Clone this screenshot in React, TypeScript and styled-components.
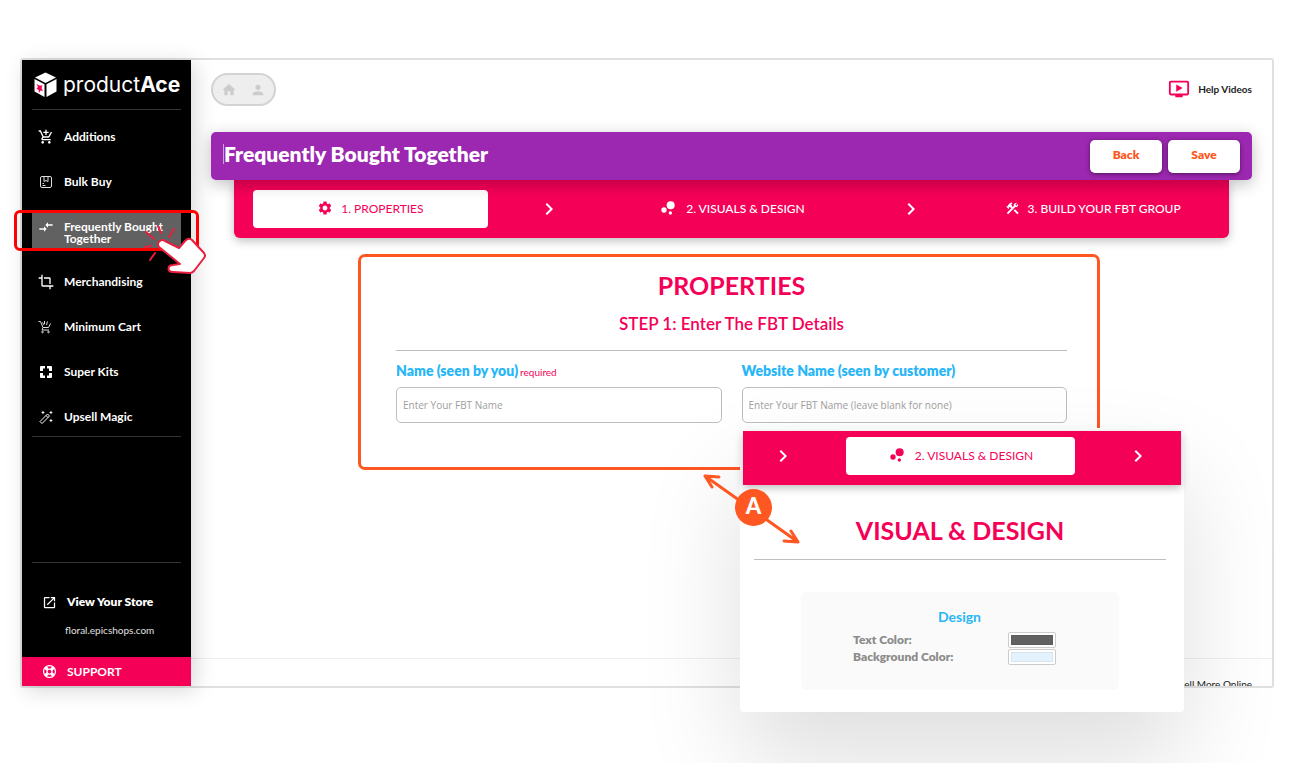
import React from "react";
import styled, { createGlobalStyle } from "styled-components";
import {
  MdAddShoppingCart,
  MdBubbleChart,
  MdChevronRight,
  MdCompareArrows,
  MdConstruction,
  MdCrop,
  MdHome,
  MdOndemandVideo,
  MdOpenInNew,
  MdPerson,
  MdSettings,
} from "react-icons/md";

const color = {
  pink: "#f50057",
  purple: "#9c27b0",
  orange: "#ff5722",
  blue: "#29b6f6",
  line: "#bdbdbd",
};

const GlobalStyle = createGlobalStyle`
  *, *::before, *::after { box-sizing: border-box; }
  body { margin: 0; background: #fff; color: #222; font-family: Lato, "Open Sans", sans-serif; }
  button, input { font-family: inherit; }
  h1, h2, h3, p { margin: 0; }
  svg { display: block; flex: none; }
`;

const Stage = styled.div`
  position: relative;
  min-height: 100vh;
  padding: 58px 25px 75px 20px;
  overflow: hidden;
`;

const Shell = styled.div`
  display: flex;
  height: calc(100vh - 133px);
  min-height: 630px;
  border: 2px solid #e0e0e0;
  border-radius: 3px;
`;

/* ---------- sidebar ---------- */

const Sidebar = styled.aside`
  position: relative;
  z-index: 1;
  display: flex;
  flex-direction: column;
  flex: 0 0 169px;
  background: #000;
  color: #fff;
  box-shadow: 4px 4px 20px rgba(0, 0, 0, 0.16);
`;

const Brand = styled.a`
  display: flex;
  align-items: center;
  gap: 6px;
  height: 49px;
  padding-left: 12px;
  color: #fff;
  text-decoration: none;
  font: 400 21px/28px Inter, sans-serif;
  b { font-weight: 700; }
`;

const Rule = styled.hr`
  width: auto;
  height: 1px;
  margin: 0 10px;
  border: 0;
  background: #333;
`;

const NavList = styled.nav`
  display: flex;
  flex-direction: column;
  gap: 10px;
  padding: 9px 10px 2px;
`;

const NavLink = styled.a<{ $active?: boolean }>`
  position: relative;
  display: flex;
  align-items: ${(p) => (p.$active ? "flex-start" : "center")};
  gap: 10px;
  min-height: ${(p) => (p.$active ? 37 : 35)}px;
  margin: ${(p) => (p.$active ? "3px 0 5px" : "0")};
  padding: ${(p) => (p.$active ? "7px 0 0 6px" : "0 0 0 6px")};
  background: ${(p) => (p.$active ? "#616161" : "transparent")};
  color: #fff;
  font-size: 12px;
  font-weight: 700;
  line-height: 12px;
  text-decoration: none;
`;

const NavText = styled.span<{ $active?: boolean }>`
  padding-top: ${(p) => (p.$active ? 2 : 0)}px;
`;

const Highlight = styled.span`
  position: absolute;
  inset: -2px -18px;
  border: 3px solid #ff0000;
  border-radius: 6px;
`;

const Pointer = styled.span`
  position: absolute;
  left: 112px;
  top: 12px;
  z-index: 2;
`;

const StoreBlock = styled.div`
  margin-top: auto;
`;

const StoreLink = styled.a`
  display: flex;
  align-items: center;
  gap: 10px;
  padding: 29px 0 0 20px;
  color: #fff;
  font-size: 12px;
  font-weight: 800;
  line-height: 20px;
  text-decoration: none;
`;

const StoreUrl = styled.a`
  display: block;
  padding: 10px 0 19px 43px;
  color: #e0e0e0;
  font-size: 10px;
  line-height: 16px;
  text-decoration: none;
`;

const Support = styled.a`
  display: flex;
  align-items: center;
  gap: 10px;
  height: 29px;
  padding-left: 20px;
  background: ${color.pink};
  color: #fff;
  font-size: 12px;
  font-weight: 700;
  text-decoration: none;
`;

/* ---------- main area ---------- */

const Main = styled.main`
  display: flex;
  flex-direction: column;
  flex: 1;
  min-width: 0;
`;

const TopBar = styled.div`
  display: flex;
  align-items: center;
  justify-content: space-between;
  padding: 13px 20px 0;
`;

const Pill = styled.div`
  display: flex;
  align-items: center;
  gap: 13px;
  height: 33px;
  padding: 0 8px;
  border: 2px solid #d3d3d3;
  border-radius: 17px;
  background: #eee;
`;

const PillButton = styled.button`
  padding: 0;
  border: 0;
  background: none;
  color: #ccc;
`;

const HelpLink = styled.a`
  display: flex;
  align-items: center;
  gap: 8px;
  padding-bottom: 2px;
  color: #222;
  font-size: 10px;
  font-weight: 700;
  text-decoration: none;
  svg { color: ${color.pink}; }
`;

const Banner = styled.header`
  position: relative;
  z-index: 1;
  display: flex;
  align-items: center;
  justify-content: space-between;
  height: 48px;
  margin: 26px 20px 0;
  padding: 0 12px;
  border-radius: 5px;
  background: ${color.purple};
  box-shadow: 0 4px 16px rgba(0, 0, 0, 0.25);
`;

const Title = styled.h1`
  margin-bottom: 4px;
  border-left: 1px solid #d39ddd;
  color: #fff;
  font-size: 21px;
  font-weight: 800;
  line-height: 20px;
`;

const Actions = styled.div`
  display: flex;
  gap: 6px;
`;

const ActionButton = styled.button`
  width: 72px;
  height: 33px;
  padding: 0 0 3px;
  border: 0;
  border-radius: 5px;
  background: #fff;
  color: ${color.orange};
  font-size: 12px;
  font-weight: 800;
  box-shadow: 0 1px 4px rgba(0, 0, 0, 0.5);
`;

const Steps = styled.nav`
  display: grid;
  grid-template-columns: 13fr 7fr 13fr 7fr 13fr;
  align-items: center;
  justify-items: center;
  margin: 0 43px;
  padding: 10px 19px;
  border-radius: 0 0 6px 6px;
  background: ${color.pink};
  color: #fff;
  box-shadow: 0 3px 10px rgba(0, 0, 0, 0.25);
  > svg { margin-right: 3px; }
`;

const Step = styled.button<{ $active?: boolean }>`
  display: flex;
  align-items: center;
  justify-content: center;
  gap: 8px;
  width: 100%;
  height: 38px;
  padding: 0 0 2px;
  border: 0;
  border-radius: 4px;
  background: ${(p) => (p.$active ? "#fff" : "transparent")};
  color: ${(p) => (p.$active ? color.pink : "#fff")};
  font-size: 12px;
  font-weight: ${(p) => (p.$active ? 400 : 500)};
`;

const CardArea = styled.div`
  flex: 1;
  padding: 16px 5px 0 0;
`;

const Card = styled.section`
  max-width: 742px;
  height: 216px;
  margin: 0 auto;
  padding: 16px 30px 0 35px;
  border: 3px solid ${color.orange};
  border-radius: 7px;
`;

const Heading = styled.h2`
  color: ${color.pink};
  font-size: 25px;
  font-weight: 700;
  line-height: 24px;
  text-align: center;
`;

const SubHeading = styled.h3`
  margin: 17px 0 16px;
  color: ${color.pink};
  font-size: 17px;
  font-weight: 600;
  line-height: 20px;
  text-align: center;
`;

const Divider = styled.hr`
  height: 1px;
  margin: 0;
  border: 0;
  background: ${color.line};
`;

const Fields = styled.form`
  display: grid;
  grid-template-columns: 1fr 1fr;
  gap: 20px;
  padding-top: 10px;
`;

const Field = styled.div`
  display: flex;
  flex-direction: column;
  gap: 6px;
`;

const FieldLabel = styled.label`
  height: 20px;
  color: ${color.blue};
  font-size: 14px;
  font-weight: 800;
  line-height: 20px;
  small { margin-left: 2px; color: ${color.pink}; font-size: 10px; font-weight: 400; line-height: 10px; }
`;

const TextInput = styled.input`
  width: 100%;
  height: 36px;
  padding: 0 6px;
  border: 1px solid ${color.line};
  border-radius: 5px;
  background: transparent;
  font-family: "Open Sans", sans-serif;
  font-size: 10px;
  &::placeholder { color: #9e9e9e; opacity: 1; }
`;

const Footer = styled.footer`
  height: 28px;
  padding: 17px 20px 0;
  overflow: hidden;
  border-top: 1px solid #eee;
  color: #222;
  font-size: 10px;
  line-height: 16px;
  text-align: right;
`;

/* ---------- floating panel ---------- */

const Callout = styled.section`
  position: absolute;
  right: 115px;
  top: 428px;
  z-index: 3;
  width: 444px;
  padding: 3px 3px 22px;
  border-radius: 4px;
  background: #fff;
  box-shadow: 0 50px 100px rgba(0, 0, 0, 0.13);
`;

const CalloutBar = styled.nav`
  display: flex;
  align-items: center;
  justify-content: center;
  gap: 51px;
  height: 54px;
  padding: 0 4px 4px 0;
  background: ${color.pink};
  color: #fff;
  box-shadow: 0 3px 8px rgba(0, 0, 0, 0.25);
`;

const CalloutStep = styled(Step)`
  flex: 0 0 229px;
`;

const CalloutBody = styled.div`
  padding: 33px 15px 0 11px;
`;

const PanelHeading = styled(Heading)`
  margin-bottom: 17px;
`;

const DesignBox = styled.fieldset`
  width: 318px;
  margin: 32px 0 0 47px;
  padding: 16px 63px 25px 52px;
  border: 0;
  border-radius: 5px;
  background: #fafafa;
`;

const DesignTitle = styled.h3`
  margin: 0 0 5px 10px;
  color: ${color.blue};
  font-size: 14px;
  font-weight: 700;
  line-height: 18px;
  text-align: center;
`;

const ColorRow = styled.div`
  display: flex;
  align-items: center;
  justify-content: space-between;
  height: 17px;
  color: #8c8c8c;
  font-size: 12px;
  font-weight: 800;
`;

const Swatch = styled.input`
  appearance: none;
  width: 48px;
  height: 16px;
  padding: 2px;
  border: 1px solid #ccc;
  border-radius: 2px;
  background: #fff;
  &::-webkit-color-swatch-wrapper { padding: 0; }
  &::-webkit-color-swatch { border: 1px solid rgba(0, 0, 0, 0.05); border-radius: 0; }
`;

const Marker = styled.div`
  position: absolute;
  left: -40px;
  top: 43px;
  width: 104px;
  height: 76px;
`;

const MarkerDot = styled.span`
  position: absolute;
  left: 35px;
  top: 18px;
  width: 37px;
  height: 37px;
  border-radius: 50%;
  background: ${color.orange};
  color: #fff;
  font: 900 22px/34px Lato, sans-serif;
  text-align: center;
`;

/* ---------- drawings ---------- */

const LogoIcon = () => (
  <svg width="23" height="26" viewBox="0 0 23 26" fill="#fff">
    <path d="M11.500 0.500L22 5.500L11.500 11L1 5.500Z" />
    <path d="M0.500 7L10.500 12.300V25L0.500 19.500Z" />
    <path d="M22.500 7L12.500 12.300V25L22.500 19.500Z" />
    <path fill={color.pink} d="M2.500 12L5.500 13.500L8.500 13.500L7.500 16L9 19L6.500 18.500L5 21L4.600 18L2.500 16.500L4 15Z" />
  </svg>
);

const BoxIcon = () => (
  <svg width="16" height="16" viewBox="0 0 16 16" fill="none" stroke="#ddd" strokeWidth="1">
    <rect x="2.500" y="2.500" width="11" height="11" rx="1.500" />
    <path d="M6 2.500V7.500L8 6.500L10 7.500V2.500M4.500 11.500H7.500M4.500 9.500H6" />
  </svg>
);

const MiniCartIcon = () => (
  <svg width="16" height="16" viewBox="0 0 16 16" fill="none" stroke="#ddd" strokeWidth="1">
    <path d="M0.500 2.500H2.500L5 8.500H10.500L12.500 4.500M5 8.500L4 11H11M6.500 2V5M4.500 3.500L6 6M9.500 2.500L8.500 6" />
    <circle cx="4.500" cy="13" r="0.800" />
    <circle cx="10.500" cy="13" r="0.800" />
  </svg>
);

const KitsIcon = () => (
  <svg width="16" height="16" viewBox="0 0 16 16" fill="#fff">
    <path d="M3 2H7V4.500H5V7H2V3A1 1 0 0 1 3 2ZM9 2H13A1 1 0 0 1 14 3V7H11V4.500H9ZM2 9H5V11.500H7V14H3A1 1 0 0 1 2 13ZM11 9H14V13A1 1 0 0 1 13 14H9V11.500H11Z" />
  </svg>
);

const WandIcon = () => (
  <svg width="16" height="16" viewBox="0 0 16 16" fill="none" stroke="#fff">
    <path d="M2 12.500L9.500 5L11.500 7L4 14.500Z M8 6.500L10 8.500" strokeLinejoin="round" />
    <path fill="#fff" stroke="none" d="M5 1.500L5.600 3L7 3.500L5.600 4L5 5.500L4.300 4L3 3.500L4.300 3ZM13 1.500L13.600 3L15 3.500L13.600 4L13 5.500L12.300 4L11 3.500L12.300 3ZM13 9.500L13.600 11L15 11.500L13.600 12L13 13.500L12.300 12L11 11.500L12.300 11Z" />
  </svg>
);

const LifeRingIcon = () => (
  <svg width="15" height="15" viewBox="0 0 24 24" fill="none" stroke="#fff">
    <circle cx="12" cy="12" r="9.500" strokeWidth="2" />
    <circle cx="12" cy="12" r="4" strokeWidth="2" />
    <path d="M5.500 5.500L9 9M18.500 5.500L15 9M5.500 18.500L9 15M18.500 18.500L15 15" strokeWidth="5" />
  </svg>
);

const HandIcon = () => (
  <svg width="64" height="54" viewBox="0 0 64 54" fill="none" stroke="#e91e3f" strokeWidth="2" strokeLinecap="round">
    <path
      fill="#fff"
      strokeLinejoin="round"
      d="M21 17L35 24L41 17Q45 13 48 16L60 29Q62 32 60 34L50 47Q48 49 46 49L29 48C23 48 23 41 29 41L36 40L15 23C12 19 17 14 21 17Z"
    />
    <path d="M1 23L7 22M2 8L10 15M14 2L17 9M30 5L25 13M11 29L6 36" />
  </svg>
);

const ArrowsDrawing = () => (
  <svg width="104" height="76" viewBox="0 0 104 76" fill="none" stroke={color.orange} strokeWidth="3" strokeLinecap="round">
    <path d="M5 5L98 71M5 5L19 6M5 5L12 16M98 71L84 70M98 71L91 60" />
  </svg>
);

/* ---------- page ---------- */

const navItems = [
  { label: "Additions", icon: <MdAddShoppingCart size={16} /> },
  { label: "Bulk Buy", icon: <BoxIcon /> },
  { label: "Frequently Bought Together", icon: <MdCompareArrows size={16} />, active: true },
  { label: "Merchandising", icon: <MdCrop size={16} /> },
  { label: "Minimum Cart", icon: <MiniCartIcon /> },
  { label: "Super Kits", icon: <KitsIcon /> },
  { label: "Upsell Magic", icon: <WandIcon /> },
];

export default function App() {
  return (
    <Stage>
      <GlobalStyle />
      <Shell>
        <Sidebar>
          <Brand href="#">
            <LogoIcon />
            <span>product<b>Ace</b></span>
          </Brand>
          <Rule />
          <NavList>
            {navItems.map((item) => (
              <NavLink key={item.label} href="#" $active={item.active}>
                {item.icon}
                <NavText $active={item.active}>{item.label}</NavText>
                {item.active && (
                  <>
                    <Highlight />
                    <Pointer><HandIcon /></Pointer>
                  </>
                )}
              </NavLink>
            ))}
          </NavList>
          <Rule />
          <StoreBlock>
            <Rule />
            <StoreLink href="#">
              <MdOpenInNew size={15} />
              View Your Store
            </StoreLink>
            <StoreUrl href="#">floral.epicshops.com</StoreUrl>
            <Support href="#">
              <LifeRingIcon />
              SUPPORT
            </Support>
          </StoreBlock>
        </Sidebar>

        <Main>
          <TopBar>
            <Pill>
              <PillButton aria-label="Home"><MdHome size={16} /></PillButton>
              <PillButton aria-label="Account"><MdPerson size={16} /></PillButton>
            </Pill>
            <HelpLink href="#">
              <MdOndemandVideo size={22} />
              Help Videos
            </HelpLink>
          </TopBar>
          <Banner>
            <Title>Frequently Bought Together</Title>
            <Actions>
              <ActionButton>Back</ActionButton>
              <ActionButton>Save</ActionButton>
            </Actions>
          </Banner>
          <Steps>
            <Step $active><MdSettings size={16} />1. PROPERTIES</Step>
            <MdChevronRight size={24} />
            <Step><MdBubbleChart size={20} />2. VISUALS &amp; DESIGN</Step>
            <MdChevronRight size={24} />
            <Step><MdConstruction size={15} />3. BUILD YOUR FBT GROUP</Step>
          </Steps>
          <CardArea>
            <Card>
              <Heading>PROPERTIES</Heading>
              <SubHeading>STEP 1: Enter The FBT Details</SubHeading>
              <Divider />
              <Fields>
                <Field>
                  <FieldLabel htmlFor="fbt-name">Name (seen by you)<small>required</small></FieldLabel>
                  <TextInput id="fbt-name" placeholder="Enter Your FBT Name" />
                </Field>
                <Field>
                  <FieldLabel htmlFor="fbt-site">Website Name (seen by customer)</FieldLabel>
                  <TextInput id="fbt-site" placeholder="Enter Your FBT Name (leave blank for none)" />
                </Field>
              </Fields>
            </Card>
          </CardArea>
          <Footer>Sell More Online</Footer>
        </Main>
      </Shell>

      <Callout>
        <CalloutBar>
          <MdChevronRight size={24} />
          <CalloutStep $active><MdBubbleChart size={20} />2. VISUALS &amp; DESIGN</CalloutStep>
          <MdChevronRight size={24} />
        </CalloutBar>
        <CalloutBody>
          <PanelHeading>VISUAL &amp; DESIGN</PanelHeading>
          <Divider />
          <DesignBox>
            <DesignTitle>Design</DesignTitle>
            <ColorRow>
              <label htmlFor="text-color">Text Color:</label>
              <Swatch id="text-color" type="color" defaultValue="#616161" />
            </ColorRow>
            <ColorRow>
              <label htmlFor="bg-color">Background Color:</label>
              <Swatch id="bg-color" type="color" defaultValue="#e3f2fd" />
            </ColorRow>
          </DesignBox>
        </CalloutBody>
        <Marker>
          <ArrowsDrawing />
          <MarkerDot>A</MarkerDot>
        </Marker>
      </Callout>
    </Stage>
  );
}
